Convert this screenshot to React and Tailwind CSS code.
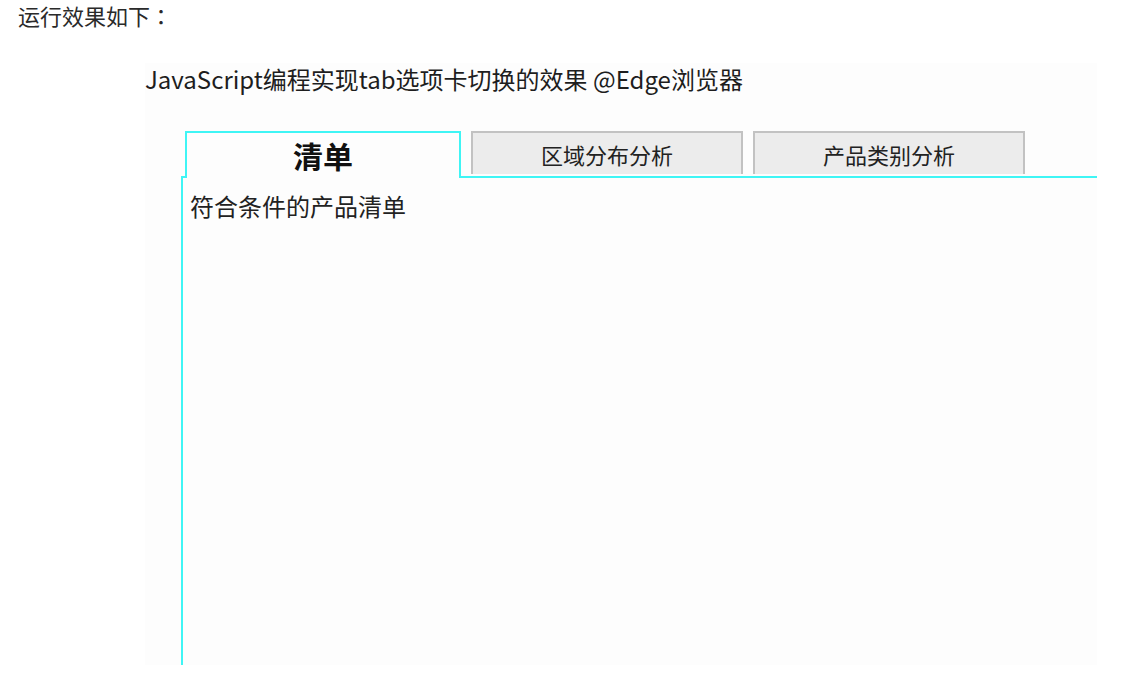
import React, { useState } from 'react';

const tabs = [
  { key: 'list', label: '清单', content: '符合条件的产品清单' },
  { key: 'region', label: '区域分布分析', content: '区域分布分析' },
  { key: 'category', label: '产品类别分析', content: '产品类别分析' },
];

export default function App() {
  const [active, setActive] = useState('list');
  const current = tabs.find((t) => t.key === active);

  return (
    <div className="min-h-screen bg-white text-[#222] font-['Noto_Sans_CJK_SC','Noto_Sans',sans-serif]">
      {/* Intro line */}
      <p className="pl-[18px] text-[22px] leading-[30px] text-[#2a2a2a]">
        运行效果如下<span className="font-['Noto_Sans_CJK_TC',sans-serif]">：</span>
      </p>

      {/* Screenshot box */}
      <div className="ml-[145px] mt-[33px] w-[952px] h-[602px] bg-[#fdfdfd] flex flex-col">
        <h2 className="text-[24px] leading-[32px] text-[#1e1e1e]">
          JavaScript编程实现tab选项卡切换的效果 @Edge浏览器
        </h2>

        <div className="ml-[36px] mt-[36px] flex flex-col flex-1">
          {/* Tab bar */}
          <div className="relative z-10 -mb-[2px] flex items-start gap-[10px] pl-[4px]">
            {tabs.map((tab) =>
              tab.key === active ? (
                <button
                  key={tab.key}
                  onClick={() => setActive(tab.key)}
                  className="w-[276px] h-[47px] border-2 border-b-0 border-[#3ff5f5] bg-[#fdfdfd] text-[30px] font-bold leading-[40px] text-[#111] pb-[2px]"
                >
                  {tab.label}
                </button>
              ) : (
                <button
                  key={tab.key}
                  onClick={() => setActive(tab.key)}
                  className="w-[272px] h-[43px] border-2 border-b-0 border-[#c2c2c2] bg-[#ececec] text-[22px] leading-[38px] text-[#222]"
                >
                  {tab.label}
                </button>
              )
            )}
          </div>

          {/* Panel */}
          <div className="flex-1 border-l-2 border-t-2 border-[#3ff5f5] pl-[7px] pt-[11px]">
            <p className="text-[24px] leading-[34px] text-[#222]">{current.content}</p>
          </div>
        </div>
      </div>
    </div>
  );
}
